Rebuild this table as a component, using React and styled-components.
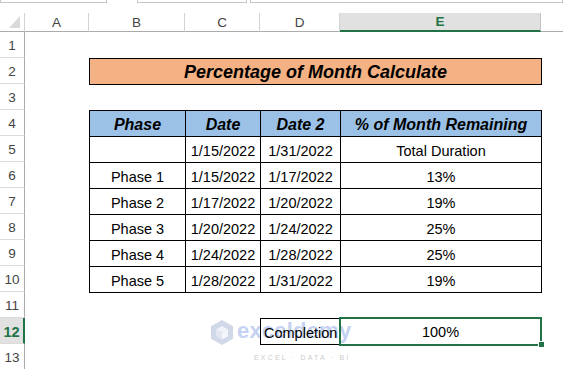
import React from "react";
import styled, { createGlobalStyle, css } from "styled-components";

const GlobalStyle = createGlobalStyle`
  html, body {
    margin: 0;
    padding: 0;
    background: #fff;
    overflow: hidden;
  }
  body {
    font-family: "Liberation Sans", Arial, sans-serif;
  }
`;

const GREEN = "#217346";

const Page = styled.div`
  position: relative;
  width: 563px;
  height: 369px;
  overflow: hidden;
  background: #fff;
`;

const FormulaStrip = styled.div`
  height: 13px;
  display: flex;
  align-items: flex-start;
`;

const StripBox = styled.div`
  box-sizing: border-box;
  height: 3px;
  width: ${(p) => (p.$w ? `${p.$w}px` : "auto")};
  flex: ${(p) => (p.$grow ? 1 : "none")};
  margin-left: ${(p) => p.$ml || 0}px;
  border: 1px solid #c6c6c6;
  border-top: none;
`;

const Sheet = styled.div`
  position: relative;
  z-index: 1;
  display: grid;
  grid-template-columns: 25px 64px 96px 75px 80px 201px 1fr;
  grid-template-rows: 19px repeat(13, 26px);
`;

const Corner = styled.div`
  position: relative;
  box-sizing: border-box;
  background: #fff;
  border-right: 1px solid #d4d4d4;
  border-bottom: 1px solid #ababab;
`;

const CornerTriangle = styled.span`
  position: absolute;
  right: 4px;
  bottom: 3px;
  width: 11px;
  height: 12px;
  background: #dadada;
  clip-path: polygon(100% 0, 100% 100%, 0 100%);
`;

const ColHead = styled.div`
  box-sizing: border-box;
  display: flex;
  align-items: center;
  justify-content: center;
  font-size: 13.5px;
  color: #444;
  border-right: 1px solid #d4d4d4;
  border-bottom: 1px solid #ababab;
  ${(p) =>
    p.$selected &&
    css`
      background: #e1e1e1;
      color: ${GREEN};
      font-weight: 700;
      border-right-color: #c2c2c2;
      border-bottom: 2px solid ${GREEN};
    `}
  ${(p) =>
    p.$blank &&
    css`
      border-right: none;
    `}
`;

const RowHead = styled.div`
  box-sizing: border-box;
  display: flex;
  align-items: center;
  justify-content: center;
  padding-top: 2px;
  font-size: 13.5px;
  color: #444;
  background: #fff;
  border-right: 1px solid #ababab;
  border-bottom: 1px solid #dcdcdc;
  ${(p) =>
    p.$selected &&
    css`
      background: #e1e1e1;
      color: ${GREEN};
      font-weight: 700;
      font-size: 14.5px;
      border-right: 2px solid ${GREEN};
    `}
`;

const Cell = styled.div`
  position: relative;
  box-sizing: border-box;
  display: flex;
  align-items: center;
  justify-content: ${(p) => (p.$align === "left" ? "flex-start" : "center")};
  padding: 2px 3px 0;
  grid-column: span ${(p) => p.$span || 1};
  font-size: ${(p) => p.$size || 14.5}px;
  font-weight: ${(p) => (p.$bold ? 700 : 400)};
  font-style: ${(p) => (p.$italic ? "italic" : "normal")};
  color: #000;
  background: ${(p) => p.$fill || "transparent"};
  white-space: nowrap;
  ${(p) =>
    p.$boxed &&
    css`
      border: 1px solid #000;
      margin: 0 -1px -1px 0;
    `}
  ${(p) =>
    p.$active &&
    css`
      &::before {
        content: "";
        position: absolute;
        left: -1px;
        top: -1px;
        right: -1px;
        bottom: -2px;
        border: 2px solid ${GREEN};
      }
      &::after {
        content: "";
        position: absolute;
        right: -3px;
        bottom: -3px;
        width: 5px;
        height: 5px;
        background: ${GREEN};
        border-left: 1px solid #fff;
        border-top: 1px solid #fff;
      }
    `}
`;

const Watermark = styled.div`
  position: absolute;
  z-index: 0;
  left: 210px;
  top: 320px;
  display: grid;
  grid-template-columns: 24px auto;
  column-gap: 3px;
  opacity: 0.45;
  pointer-events: none;
`;

const WmWord = styled.div`
  font-size: 22px;
  line-height: 22px;
  font-weight: 700;
  color: #7f9de3;
  letter-spacing: 0.2px;
`;

const WmTag = styled.div`
  grid-column: 2;
  margin: 9px 0 0 17px;
  font-size: 7px;
  line-height: 7px;
  letter-spacing: 2.2px;
  color: #8a8a8a;
  white-space: nowrap;
`;

const CubeLogo = () => (
  <svg width="24" height="25" viewBox="0 0 24 25">
    <polygon points="12,0 23,6.2 23,18.8 12,25 1,18.8 1,6.2" fill="#9aa9cc" />
    <polygon points="12,6 18,9.4 12,12.8 6,9.4" fill="#dfe5f3" />
    <polygon points="6,9.4 12,12.8 12,19.6 6,16.2" fill="#c2cce4" />
    <polygon points="18,9.4 12,12.8 12,19.6 18,16.2" fill="#e9edf7" />
  </svg>
);

const COLS = ["A", "B", "C", "D", "E"];

const PHASES = [
  ["Phase 1", "1/15/2022", "1/17/2022", "13%"],
  ["Phase 2", "1/17/2022", "1/20/2022", "19%"],
  ["Phase 3", "1/20/2022", "1/24/2022", "25%"],
  ["Phase 4", "1/24/2022", "1/28/2022", "25%"],
  ["Phase 5", "1/28/2022", "1/31/2022", "19%"],
];

function TableRow({ values, head }) {
  return values.map((v, i) => (
    <Cell
      key={i}
      $boxed
      $bold={head}
      $italic={head}
      $size={head ? 16 : undefined}
      $fill={head ? "#9bc2e6" : undefined}
    >
      {v}
    </Cell>
  ));
}

function renderRow(n) {
  switch (n) {
    case 2:
      return (
        <>
          <Cell />
          <Cell $span={4} $boxed $bold $italic $size={18} $fill="#f4b183">
            Percentage of Month Calculate
          </Cell>
          <Cell />
        </>
      );
    case 4:
      return (
        <>
          <Cell />
          <TableRow head values={["Phase", "Date", "Date 2", "% of Month Remaining"]} />
          <Cell />
        </>
      );
    case 5:
      return (
        <>
          <Cell />
          <TableRow values={["", "1/15/2022", "1/31/2022", "Total Duration"]} />
          <Cell />
        </>
      );
    case 12:
      return (
        <>
          <Cell />
          <Cell />
          <Cell />
          <Cell $boxed $align="left">Completion</Cell>
          <Cell $active>100%</Cell>
          <Cell />
        </>
      );
    default:
      if (n >= 6 && n <= 10) {
        return (
          <>
            <Cell />
            <TableRow values={PHASES[n - 6]} />
            <Cell />
          </>
        );
      }
      return <Cell $span={6} />;
  }
}

export default function App() {
  const rows = Array.from({ length: 13 }, (_, i) => i + 1);
  return (
    <Page>
      <GlobalStyle />
      <Watermark>
        <CubeLogo />
        <WmWord>exceldemy</WmWord>
        <WmTag>EXCEL · DATA · BI</WmTag>
      </Watermark>
      <FormulaStrip>
        <StripBox $w={107} />
        <StripBox $w={110} $ml={30} />
        <StripBox $grow $ml={3} />
      </FormulaStrip>
      <Sheet>
        <Corner>
          <CornerTriangle />
        </Corner>
        {COLS.map((c) => (
          <ColHead key={c} $selected={c === "E"}>
            {c}
          </ColHead>
        ))}
        <ColHead $blank />
        {rows.map((n) => (
          <React.Fragment key={n}>
            <RowHead $selected={n === 12}>{n}</RowHead>
            {renderRow(n)}
          </React.Fragment>
        ))}
      </Sheet>
    </Page>
  );
}
